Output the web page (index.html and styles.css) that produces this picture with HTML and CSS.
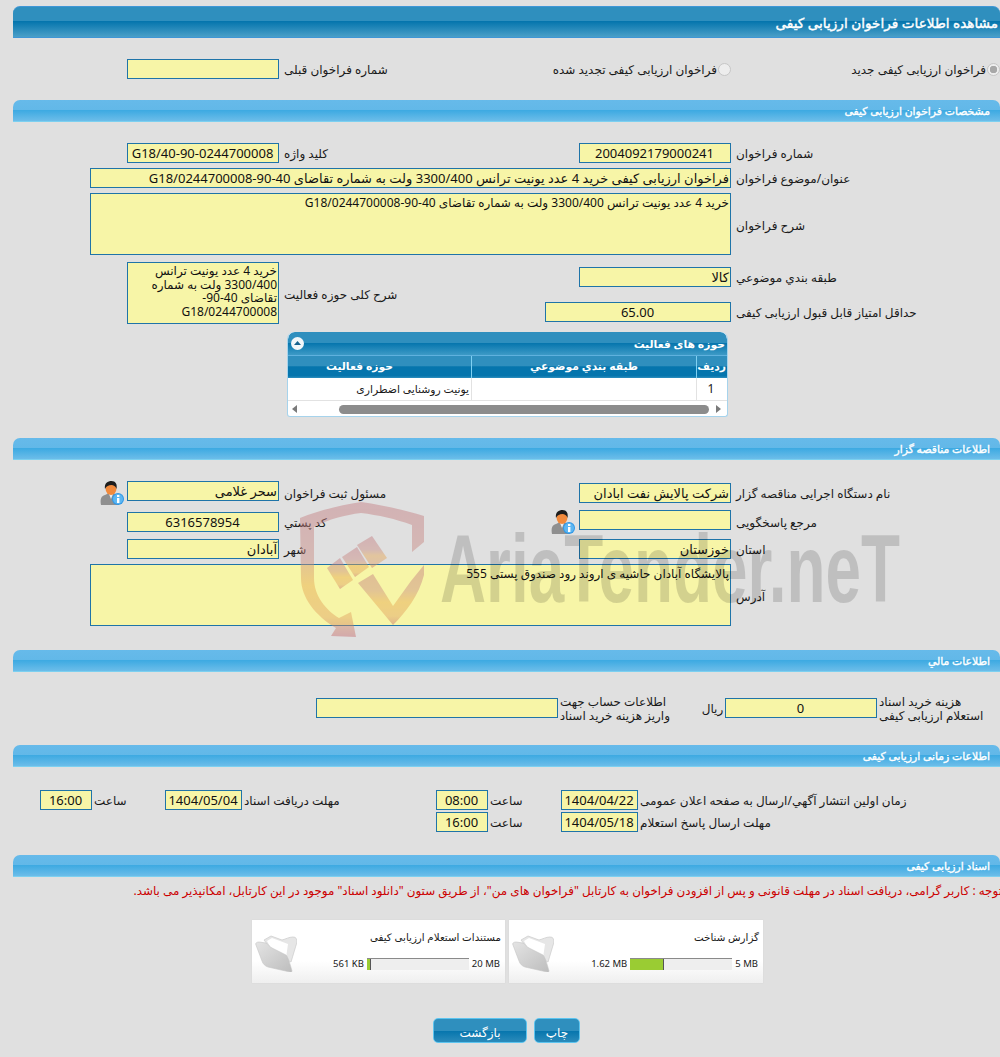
FILE: index.html
```html
<!DOCTYPE html>
<html lang="fa" dir="rtl">
<head>
<meta charset="utf-8">
<title>مشاهده اطلاعات فراخوان ارزیابی کیفی</title>
<link rel="stylesheet" href="styles.css">
</head>
<body>
<svg width="0" height="0" class="defs">
  <defs>
    <linearGradient id="folder-front" x1="0" y1="0" x2="1" y2="1">
      <stop offset="0" stop-color="#e4e4e4"/>
      <stop offset="1" stop-color="#bdbdbd"/>
    </linearGradient>
    <symbol id="person" viewBox="0 0 24 24">
      <path d="M1 24c-1-6 0-9 4-10l4-2 2 3 2-3 3 2c2 1 3 3 3 10z" fill="#8f8f8f"/>
      <path d="M9 13l2 5 2-5z" fill="#e8eef2"/>
      <ellipse cx="11" cy="8" rx="5.400" ry="6" fill="#f28a3c"/>
      <path d="M5 8C4 2 8 0 11.500 0c4 0 6 3 5 8-1-3-3-4-5-4-3 0-5 1-6.500 4z" fill="#1d1d1d"/>
      <circle cx="18" cy="18" r="6" fill="#2f97e6"/>
      <circle cx="18" cy="18" r="5" fill="#5cb6f2"/>
      <rect x="17" y="17" width="2.400" height="5" fill="#fff"/>
      <rect x="17" y="14" width="2.400" height="2" fill="#fff"/>
    </symbol>
    <symbol id="folder" viewBox="0 0 42 38">
      <path d="M9 6L16 2L27 6C31 5 34 3 38 3C41 3 42 5 42 8L36 28L20 20Z" fill="#e6e6e6" stroke="#cfcfcf" stroke-width=".8"/>
      <path d="M12 7L17 4L33 10L31 24L18 18Z" fill="#fff"/>
      <path d="M1 11C0 9 2 8 4 8L11 9C13 10 15 13 17 14L31 21C33 23 35 30 37 37C37 38 36 38 35 38L13 33C10 32 8 30 7 27Z" fill="url(#folder-front)" stroke="#c4c4c4" stroke-width=".6"/>
    </symbol>
  </defs>
</svg>

<main class="page">
  <header class="bar bar-main">مشاهده اطلاعات فراخوان ارزیابی کیفی</header>

  <div class="grid-5 row-type">
    <div class="opt"><input type="radio" class="radio radio-on" disabled checked><span>فراخوان ارزیابی کیفی جدید</span></div>
    <div class="opt"><input type="radio" class="radio" disabled><span>فراخوان ارزیابی کیفی تجدید شده</span></div>
    <div class="lbl">شماره فراخوان قبلی</div>
    <div class="fld"></div>
  </div>

  <section class="sec sec-spec">
    <h2 class="bar bar-sec">مشخصات فراخوان ارزیابی کیفی</h2>
    <div class="body body-spec">
      <div class="grid-5">
        <div class="lbl">شماره فراخوان</div>
        <div class="fld center">2004092179000241</div>
        <div class="lbl">کلید واژه</div>
        <div class="fld center">G18/40-90-0244700008</div>
      </div>
      <div class="grid-5 mt5">
        <div class="lbl">عنوان/موضوع فراخوان</div>
        <div class="fld wide">فراخوان ارزیابی کیفی خرید 4 عدد یونیت ترانس 3300/400 ولت به شماره تقاضای 40-90-0244700008/G18</div>
      </div>
      <div class="grid-5 mt5">
        <div class="lbl lbl-mid">شرح فراخوان</div>
        <div class="fld wide area small">خرید 4 عدد یونیت ترانس 3300/400 ولت به شماره تقاضای 40-90-0244700008/G18</div>
      </div>
      <div class="grid-5 mt7 split">
        <div class="lbl l-a">طبقه بندي موضوعي</div>
        <div class="fld f-a">کالا</div>
        <div class="lbl l-b">حداقل امتیاز قابل قبول ارزیابی کیفی</div>
        <div class="fld f-b center">65.00</div>
        <div class="lbl lbl-mid l-c">شرح کلی حوزه فعالیت</div>
        <div class="fld f-c small">خرید 4 عدد یونیت ترانس 3300/400 ولت به شماره تقاضای 40-90-0244700008/G18</div>
      </div>
      <div class="panel">
        <div class="bar panel-title">
          <span>حوزه های فعالیت</span>
          <svg class="collapse" viewBox="0 0 13 13" width="13" height="13"><circle cx="6.500" cy="6.500" r="6.500" fill="#f1f6f9"/><path d="M3 8l3.500-4 3.500 4z" fill="#16628f"/></svg>
        </div>
        <div class="t-row t-head">
          <div class="c-1">ردیف</div>
          <div class="c-2">طبقه بندي موضوعي</div>
          <div class="c-3">حوزه فعالیت</div>
        </div>
        <div class="t-row t-data">
          <div class="c-1">1</div>
          <div class="c-2"></div>
          <div class="c-3">یونیت روشنایی اضطراری</div>
        </div>
        <div class="scroll">
          <span class="arr arr-r"></span>
          <span class="thumb"></span>
          <span class="arr arr-l"></span>
        </div>
      </div>
    </div>
  </section>

  <section class="sec sec-org">
    <h2 class="bar bar-sec">اطلاعات مناقصه گزار</h2>
    <div class="body body-org">
      <div class="grid-5 r-1">
        <div class="lbl">نام دستگاه اجرایی مناقصه گزار</div>
        <div class="fld down2">شرکت پالایش نفت ابادان</div>
        <div class="lbl">مسئول ثبت فراخوان</div>
        <div class="fld">سحر غلامی</div>
        <svg class="person"><use href="#person"/></svg>
      </div>
      <div class="grid-5 r-2">
        <div class="lbl">مرجع پاسخگویی</div>
        <div class="fld"></div>
        <div class="lbl lbl-person"><svg class="person"><use href="#person"/></svg><span>کد پستي</span></div>
        <div class="fld center down2">6316578954</div>
      </div>
      <div class="grid-5 r-3">
        <div class="lbl">استان</div>
        <div class="fld">خوزستان</div>
        <div class="lbl">شهر</div>
        <div class="fld">آبادان</div>
      </div>
      <div class="grid-5 mt5">
        <div class="lbl lbl-mid">آدرس</div>
        <div class="fld wide area small">پالایشگاه آبادان حاشیه ی اروند رود صندوق پستی 555</div>
      </div>
    </div>
  </section>

  <section class="sec sec-fin">
    <h2 class="bar bar-sec">اطلاعات مالي</h2>
    <div class="body fin">
      <div class="lbl lbl-2l">هزینه خرید اسناد <br>استعلام ارزیابی کیفی</div>
      <div class="fld center">0</div>
      <div class="lbl unit">ریال</div>
      <div class="lbl lbl-2l">اطلاعات حساب جهت <br>واریز هزینه خرید اسناد</div>
      <div class="fld"></div>
    </div>
  </section>

  <section class="sec sec-time">
    <h2 class="bar bar-sec">اطلاعات زمانی ارزیابی کیفی</h2>
    <div class="body times">
      <div class="lbl">زمان اولین انتشار آگهي/ارسال به صفحه اعلان عمومی</div>
      <div class="fld center">1404/04/22</div>
      <div class="lbl">ساعت</div>
      <div class="fld center">08:00</div>
      <div class="lbl">مهلت دریافت اسناد</div>
      <div class="fld center">1404/05/04</div>
      <div class="lbl">ساعت</div>
      <div class="fld center">16:00</div>
      <div class="lbl">مهلت ارسال پاسخ استعلام</div>
      <div class="fld center">1404/05/18</div>
      <div class="lbl">ساعت</div>
      <div class="fld center">16:00</div>
    </div>
  </section>

  <section class="sec sec-docs">
    <h2 class="bar bar-sec">اسناد ارزیابی کیفی</h2>
    <p class="note">توجه : کاربر گرامی، دریافت اسناد در مهلت قانونی و پس از افزودن فراخوان به کارتابل "فراخوان های من"، از طریق ستون "دانلود اسناد" موجود در این کارتابل، امکانپذیر می باشد.</p>
    <div class="cards">
      <div class="card">
        <div class="card-title">گزارش شناخت</div>
        <div class="meter">
          <span class="m-num">5 MB</span>
          <span class="track"><span class="fill" style="width:34px"></span></span>
          <span class="m-num">1.62 MB</span>
        </div>
        <svg class="folder"><use href="#folder"/></svg>
      </div>
      <div class="card">
        <div class="card-title">مستندات استعلام ارزیابی کیفی</div>
        <div class="meter">
          <span class="m-num">20 MB</span>
          <span class="track"><span class="fill" style="width:4px"></span></span>
          <span class="m-num">561 KB</span>
        </div>
        <svg class="folder"><use href="#folder"/></svg>
      </div>
    </div>
    <div class="actions">
      <button class="btn btn-print" type="button">چاپ</button>
      <button class="btn btn-back" type="button">بازگشت</button>
    </div>
  </section>
</main>

<svg class="mark" viewBox="290 495 620 150" aria-label="AriaTender.neT">
  <defs>
    <linearGradient id="wm" x1="0" y1="0" x2="0" y2="1">
      <stop offset="0" stop-color="#c27a80"/>
      <stop offset=".42" stop-color="#c98a80"/>
      <stop offset=".62" stop-color="#e6a64e"/>
      <stop offset=".85" stop-color="#e0a060"/>
      <stop offset="1" stop-color="#c4676a"/>
    </linearGradient>
  </defs>
  <g class="mark-shield" fill="url(#wm)">
    <path d="M300 518C320 510 342 505 361 502C382 505 404 510 424 516V542L412 552V525C396 519 378 515 361 513C345 515 329 519 314 527V578C314 596 326 610 339 618L351 612L356 637L331 636L336 628C316 616 301 598 301 578Z"/>
    <path d="M357 545L372 536L387 558L372 568Z"/>
    <path d="M342 557L357 547L369 567L355 577Z"/>
    <path d="M327 568L340 558L353 580L340 589Z"/>
    <path d="M358 583L373 574L393 606L411 581L424 565V575C419 595 406 612 393 625Z"/>
  </g>
  <text class="mark-text" x="440" y="602" textLength="460" lengthAdjust="spacingAndGlyphs">AriaTender.neT</text>
</svg>
</body>
</html>
```

FILE: styles.css
```css
* { box-sizing: border-box; }
html, body { margin: 0; padding: 0; }
html { background: #e0e0e0; }
body {
  position: relative;
  width: 1000px;
  height: 1057px;
  overflow: hidden;
  font-family: "Noto Sans", "DejaVu Sans", sans-serif;
  font-size: 12px;
  color: #1a1a1a;
}
.defs { position: absolute; }
.page { padding: 6px 0 0 13px; width: 1000px; }

.bar {
  margin: 0;
  color: #fff;
  font-weight: normal;
  border-radius: 7px 7px 0 0;
  white-space: nowrap;
}
.bar-main {
  height: 32px;
  line-height: 32px;
  padding-right: 2px;
  font-size: 13.600px;
  -webkit-text-stroke: .4px #fff;
  border-top: 1px solid #3f96d6;
  border-bottom: 1px solid #3f96d6;
  background: linear-gradient(#2f8fbe 0, #2f8fbe 47%, #0575ad 48%, #4a9fc8 100%);
}
.bar-sec {
  height: 22px;
  line-height: 22px;
  padding-right: 10px;
  font-size: 10.800px;
  -webkit-text-stroke: .35px #fff;
  border-bottom: 1px solid #7cd0f0;
  background: linear-gradient(#66baea 0, #62b8e8 49%, #3eaae2 50%, #6cbde9 100%);
}

.grid-5 {
  display: grid;
  grid-template-columns: 269px 152px 300px 152px 114px;
  width: 987px;
}
.lbl { height: 20px; text-align: left; padding-left: 5px; line-height: 22px; white-space: nowrap; }
.lbl-mid { align-self: center; margin-top: 2px; }
.fld {
  height: 20px;
  line-height: 18px;
  padding: 0 1px 0 0;
  background: #f7f5a7;
  border: 1px solid #1f74a8;
  font-size: 13px;
  color: #111;
  overflow: hidden;
  white-space: nowrap;
}
.center { text-align: center; }
.small { font-size: 12px; line-height: 13.500px; white-space: normal; }
.wide { grid-column: 2 / 6; margin-left: 77px; }
.area { height: 62px; padding-top: 2px; }
.mt5 { margin-top: 5px; }
.mt7 { margin-top: 7px; }

.row-type { margin-top: 21px; }
.opt { display: flex; align-items: center; gap: 1px; height: 20px; white-space: nowrap; }
.radio {
  appearance: none;
  flex: none;
  width: 13px;
  height: 13px;
  margin: 0;
  border: 1px solid #c6c6c6;
  border-radius: 50%;
  background: #ededed;
}
.radio-on { background: radial-gradient(circle, #a8a8a8 0 3.500px, #ededed 4px); }

.sec-spec { margin-top: 21px; }
.body-spec { padding-top: 21px; }
.split { grid-template-rows: 40px 22px; }
.l-a { grid-column: 1; grid-row: 1; margin-top: 5px; }
.l-b { grid-column: 1; grid-row: 2; }
.f-a { grid-column: 2; grid-row: 1; margin-top: 5px; }
.f-b { grid-column: 2 / 4; grid-row: 2; width: 186px; }
.l-c { grid-column: 3; grid-row: 1 / 3; }
.f-c { grid-column: 4; grid-row: 1 / 3; height: 62px; padding-top: 1px; }

.panel {
  width: 441px;
  height: 85px;
  margin: 8px 272px 0 0;
  background: #fff;
  border-radius: 7px 7px 3px 3px;
  border: 1px solid #a6d3ec;
  border-top: 0;
  overflow: hidden;
}
.panel-title {
  display: flex;
  justify-content: space-between;
  align-items: center;
  height: 23px;
  padding: 0 2px 0 3px;
  font-size: 10.800px;
  font-weight: bold;
  background: linear-gradient(#2f8fbe 0, #2f8fbe 47%, #0575ad 48%, #3d9ac6 100%);
}
.collapse { display: block; }
.t-row { display: grid; grid-template-columns: 31px 225px 1fr; }
.t-head {
  height: 23px;
  line-height: 19px;
  color: #fff;
  font-weight: bold;
  font-size: 10.800px;
  background: linear-gradient(#2f8fbe 0, #2f8fbe 47%, #0575ad 48%, #0575ad 90%, #2f8fbe 100%);
  border-top: 1px solid #5fb1de;
}
.t-head > div { border-left: 1px solid #7fd0f2; text-align: center; padding-bottom: 3px; }
.t-head .c-1 { text-align: right; padding-right: 1px; }
.t-head .c-3 { border-left: 0; padding-right: 40px; }
.t-data { height: 23px; line-height: 22px; font-size: 10.800px; border-bottom: 1px solid #e2e2e2; }
.t-data > div { border-left: 1px solid #e2e2e2; padding-right: 2px; }
.t-data .c-1 { text-align: center; font-size: 12px; }
.t-data .c-3 { border-left: 0; }
.scroll { display: flex; align-items: center; height: 16px; padding: 0 6px 0 4px; }
.arr { width: 0; height: 0; border-top: 4.500px solid transparent; border-bottom: 4.500px solid transparent; }
.arr-r { border-left: 5px solid #7a7a7a; }
.arr-l { border-right: 5px solid #7a7a7a; margin-right: auto; }
.thumb { width: 370px; height: 9px; margin-right: 7px; border-radius: 5px; background: #8c8c8c; }

.sec-org { margin-top: 21px; }
.body-org { padding-top: 21px; }
.r-1, .r-2 { height: 29px; }
.r-3 { height: 20px; }
.down2 { margin-top: 2px; }
.r-1 .lbl, .r-2 .lbl { margin-top: 2px; }
.person { display: block; width: 24px; height: 24px; margin-right: 3px; }
.lbl-person { display: flex; justify-content: space-between; }
.r-2 .lbl-person { margin-top: 0; }
.lbl-person .person { flex: none; margin: 0 4px 0 0; }
.lbl-person span { margin-top: 2px; }

.sec-fin { margin-top: 24px; }
.fin {
  display: grid;
  grid-template-columns: 123px 152px 55px 112px 242px;
  padding-top: 26px;
  height: 73px;
  align-content: start;
}
.lbl-2l { line-height: 14px; padding-left: 2px; margin-top: -3px; }
.unit { text-align: center; padding-left: 30px; }

.times {
  display: grid;
  grid-template-columns: 362px 77px 73px 52px 194px 77px 73px 52px;
  grid-auto-rows: 20px;
  row-gap: 2px;
  padding-top: 23px;
  height: 88px;
}
.times .lbl { padding-left: 2px; line-height: 21px; }

.note {
  margin: 6px 0 0 0;
  height: 37px;
  line-height: 15px;
  white-space: nowrap;
  color: #cc0000;
  font-size: 11.950px;
  text-indent: -2px;
}
.cards { display: flex; gap: 4px; padding-right: 237px; }
.card {
  position: relative;
  width: 254px;
  height: 63px;
  background: linear-gradient(#fff 0, #fff 65%, #efefef 100%);
  box-shadow: 0 0 1px #cfcfcf;
}
.card:last-child { width: 253px; }
.card-title { position: absolute; top: 10px; right: 4px; font-size: 10.300px; line-height: 15px; white-space: nowrap; }
.meter { position: absolute; top: 38px; right: 5px; display: flex; align-items: center; gap: 3px; font-size: 9.500px; line-height: 12px; white-space: nowrap; }
.m-num { direction: ltr; unicode-bidi: isolate; }
.track { display: block; direction: ltr; width: 102px; height: 12px; background: #eee; border-top: 1px solid #8a8a8a; }
.fill { display: block; height: 11px; background: #9acc33; border-right: 1px solid #555; }
.folder { position: absolute; left: 3px; top: 14px; width: 42px; height: 38px; }

.actions { display: flex; gap: 7px; padding: 35px 420px 0 0; }
.btn {
  height: 25px;
  border: 1px solid #5cc4ef;
  border-radius: 5px;
  color: #fff;
  font: inherit;
  font-size: 12px;
  padding: 3px 0 0;
  background: linear-gradient(#2f8fbe 0, #2f8fbe 50%, #0575ad 51%, #2b8bbb 100%);
}
.btn-print { width: 46px; }
.btn-back { width: 94px; }

.mark { position: absolute; left: 290px; top: 495px; width: 620px; height: 150px; pointer-events: none; direction: ltr; }
.mark-shield { opacity: .45; }
.mark-text {
  font-family: "Liberation Sans Narrow", "Liberation Sans", sans-serif;
  font-weight: bold;
  font-size: 96px;
  fill: #000;
  opacity: .14;
}
```
